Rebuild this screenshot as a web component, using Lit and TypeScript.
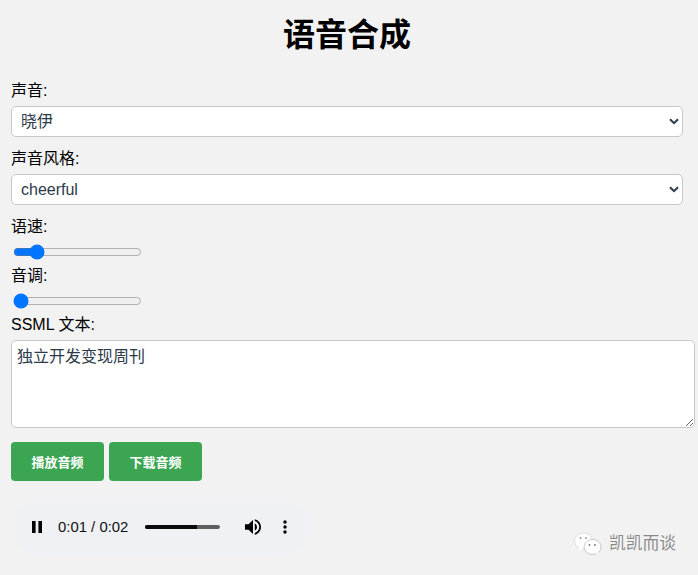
import { LitElement, css, html } from 'lit';
import { customElement } from 'lit/decorators.js';

const chevron = html`<svg class="chevron" width="10" height="7" viewBox="0 0 10 7" aria-hidden="true">
  <path d="M1 1.2l4 4 4-4" fill="none" stroke="#2d3a4a" stroke-width="2" />
</svg>`;

@customElement('app-root')
export class AppRoot extends LitElement {
  static styles = css`
    :host {
      display: block;
      position: relative;
      height: 575px;
      overflow: hidden;
      background: #f2f2f2;
      color: #000;
      font-family: 'Liberation Sans', 'Noto Sans CJK SC', sans-serif;
      font-size: 16px;
    }

    .page {
      width: 672px;
      padding-left: 11px;
    }

    h1 {
      margin: 0;
      height: 81px;
      padding-top: 16px;
      box-sizing: border-box;
      font-size: 32px;
      line-height: 38px;
      font-weight: 700;
      text-align: center;
    }

    label {
      display: block;
      height: 18px;
      line-height: 19px;
      margin-bottom: 7px;
    }

    .select-wrap {
      position: relative;
      margin-bottom: 12px;
    }

    select {
      display: block;
      width: 100%;
      height: 31px;
      box-sizing: border-box;
      padding: 0 9px;
      appearance: none;
      background: #fff;
      border: 1px solid #c8c8c8;
      border-radius: 5px;
      color: #2d3a4a;
      font: inherit;
    }

    .chevron {
      position: absolute;
      right: 4px;
      top: 12px;
      pointer-events: none;
    }

    input[type='range'] {
      display: block;
      margin: 9px 2px 6px;
    }

    textarea {
      display: block;
      width: 100%;
      box-sizing: content-box;
      height: 76px;
      margin: 0 0 14px;
      padding: 5px;
      background: #fff;
      border: 1px solid #c8c8c8;
      border-radius: 5px;
      color: #2d3a4a;
      font: inherit;
      line-height: 21px;
      outline: none;
    }

    .actions {
      display: flex;
      gap: 5px;
      margin-bottom: 19px;
    }

    button {
      width: 93px;
      height: 39px;
      padding: 0;
      border: none;
      border-radius: 4px;
      background: #3ba552;
      color: #fff;
      font: inherit;
      font-size: 13px;
      font-weight: 700;
    }

    .player {
      display: flex;
      align-items: center;
      width: 300px;
      height: 54px;
      box-sizing: border-box;
      padding-left: 21px;
      border-radius: 27px;
      background: #f0f1f4;
      color: #111;
      font-size: 14.9px;
    }

    .time {
      margin-left: 16px;
      width: 87px;
      white-space: nowrap;
    }

    .track {
      width: 75px;
      height: 4px;
      border-radius: 2px;
      background: #5f5f5f;
      overflow: hidden;
    }

    .played {
      height: 100%;
      background: #0a0a0a;
    }

    .volume {
      margin-left: 25px;
    }

    .more {
      margin-left: 22px;
    }

    .watermark {
      position: absolute;
      left: 574px;
      top: 532px;
      display: flex;
      align-items: center;
      gap: 7px;
      color: #8a8a8a;
      font-size: 16.8px;
      line-height: 24px;
      text-shadow: 0 0 1px #fff;
      white-space: nowrap;
    }
  `;

  render() {
    return html`
      <div class="page">
        <h1>语音合成</h1>

        <label>声音:</label>
        <div class="select-wrap">
          <select><option>晓伊</option><option>云希</option></select>
          ${chevron}
        </div>

        <label>声音风格:</label>
        <div class="select-wrap">
          <select><option>cheerful</option><option>sad</option></select>
          ${chevron}
        </div>

        <label>语速:</label>
        <input type="range" min="0" max="100" value="14" />

        <label>音调:</label>
        <input type="range" min="0" max="100" value="0" />

        <label>SSML 文本:</label>
        <textarea>独立开发变现周刊</textarea>

        <div class="actions">
          <button>播放音频</button>
          <button>下载音频</button>
        </div>

        <div class="player">
          <svg width="10" height="12" viewBox="0 0 10 12" aria-hidden="true">
            <path d="M0 0h3.600v12H0zM6.400 0H10v12H6.400z" fill="#000" />
          </svg>
          <span class="time">0:01 / 0:02</span>
          <div class="track"><div class="played" style="width: ${(52 / 75) * 100}%"></div></div>
          <svg class="volume" width="16" height="16" viewBox="3 3 18 18" aria-hidden="true">
            <path
              d="M3 9v6h4l5 5V4L7 9H3zm13.500 3c0-1.770-1.020-3.290-2.500-4.030v8.050c1.480-.730 2.500-2.250 2.500-4.020zM14 3.230v2.060c2.890.860 5 3.540 5 6.710s-2.110 5.850-5 6.710v2.060c4.010-.910 7-4.490 7-8.770s-2.990-7.860-7-8.770z"
              fill="#000"
            />
          </svg>
          <svg class="more" width="4" height="14" viewBox="0 0 4 14" aria-hidden="true">
            <circle cx="2" cy="2" r="1.700" fill="#000" />
            <circle cx="2" cy="7" r="1.700" fill="#000" />
            <circle cx="2" cy="12" r="1.700" fill="#000" />
          </svg>
        </div>
      </div>

      <div class="watermark">
        <svg width="28" height="24" viewBox="0 0 28 24" aria-hidden="true">
          <ellipse cx="9.500" cy="9" rx="9" ry="8" fill="#fff" stroke="#ccc" stroke-width=".6" />
          <path d="M5 15l-.5 4 4-2.500z" fill="#fff" />
          <ellipse cx="18.500" cy="15" rx="8.500" ry="7.500" fill="#fff" stroke="#aaa" stroke-width=".6" />
          <path d="M22 20.500l2 3-.2-4z" fill="#fff" />
          <circle cx="6.500" cy="6" r="1" fill="#999" />
          <circle cx="12" cy="6" r="1" fill="#999" />
          <circle cx="15.500" cy="13" r=".9" fill="#777" />
          <circle cx="21" cy="13" r=".9" fill="#777" />
        </svg>
        <span>凯凯而谈</span>
      </div>
    `;
  }
}
